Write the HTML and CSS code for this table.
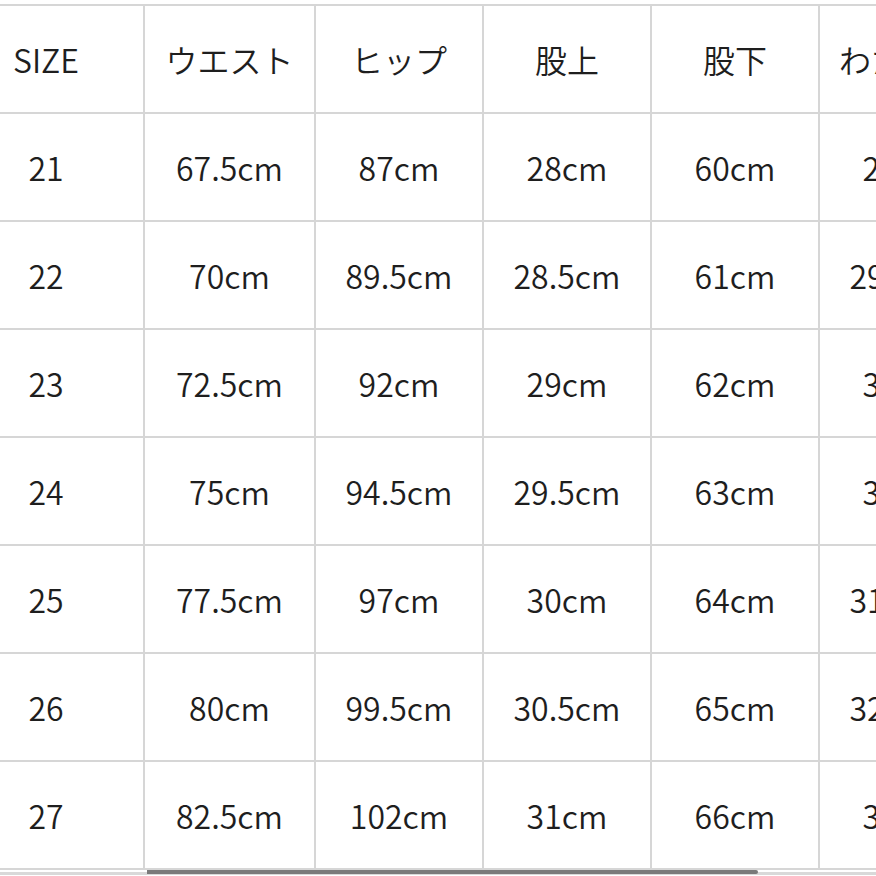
FILE: index.html
```html
<!DOCTYPE html>
<html lang="ja">
<head>
<meta charset="utf-8">
<title>サイズ表</title>
<link rel="stylesheet" href="styles.css">
</head>
<body>
<div class="viewport">
  <div class="sheet">
    <div class="grid">
      <div class="cell first">SIZE</div><div class="cell">ウエスト</div><div class="cell">ヒップ</div><div class="cell">股上</div><div class="cell">股下</div><div class="cell">わたり幅</div>
      <div class="cell first">21</div><div class="cell">67.5cm</div><div class="cell">87cm</div><div class="cell">28cm</div><div class="cell">60cm</div><div class="cell">28cm</div>
      <div class="cell first">22</div><div class="cell">70cm</div><div class="cell">89.5cm</div><div class="cell">28.5cm</div><div class="cell">61cm</div><div class="cell">29.5cm</div>
      <div class="cell first">23</div><div class="cell">72.5cm</div><div class="cell">92cm</div><div class="cell">29cm</div><div class="cell">62cm</div><div class="cell">30cm</div>
      <div class="cell first">24</div><div class="cell">75cm</div><div class="cell">94.5cm</div><div class="cell">29.5cm</div><div class="cell">63cm</div><div class="cell">31cm</div>
      <div class="cell first">25</div><div class="cell">77.5cm</div><div class="cell">97cm</div><div class="cell">30cm</div><div class="cell">64cm</div><div class="cell">31.5cm</div>
      <div class="cell first">26</div><div class="cell">80cm</div><div class="cell">99.5cm</div><div class="cell">30.5cm</div><div class="cell">65cm</div><div class="cell">32.5cm</div>
      <div class="cell first">27</div><div class="cell">82.5cm</div><div class="cell">102cm</div><div class="cell">31cm</div><div class="cell">66cm</div><div class="cell">33cm</div>
    </div>
  </div>
  <div class="track"><div class="thumb"></div></div>
</div>
</body>
</html>
```

FILE: styles.css
```css
html, body {
  margin: 0;
  padding: 0;
  background: #ffffff;
}
body {
  font-family: "Noto Sans CJK JP", "Noto Sans", sans-serif;
  color: #1e1e1e;
}
.viewport {
  width: 876px;
  height: 876px;
  overflow: hidden;
  padding-top: 4px;
  box-sizing: border-box;
}
.sheet {
  width: 876px;
  overflow: hidden;
}
.grid {
  display: grid;
  width: 986px;
  grid-template-columns: 143px 169px 166px 166px 166px 166px;
  grid-auto-rows: 106px;
  gap: 2px;
  padding: 2px 0;
  background: #d6d6d6;
}
.cell {
  background: #ffffff;
  display: flex;
  align-items: center;
  justify-content: center;
  font-size: 32px;
  font-weight: 350;
  line-height: 1;
  white-space: nowrap;
}
.cell.first {
  padding-right: 51px;
}
.track {
  display: flex;
  height: 5px;
  background: linear-gradient(#ffffff 0 2px, #d9d9d9 2px 5px);
}
.thumb {
  margin-left: 147px;
  width: 611px;
  height: 4px;
  background: #7a7a7a;
  border-radius: 0 2px 2px 0;
}
```
